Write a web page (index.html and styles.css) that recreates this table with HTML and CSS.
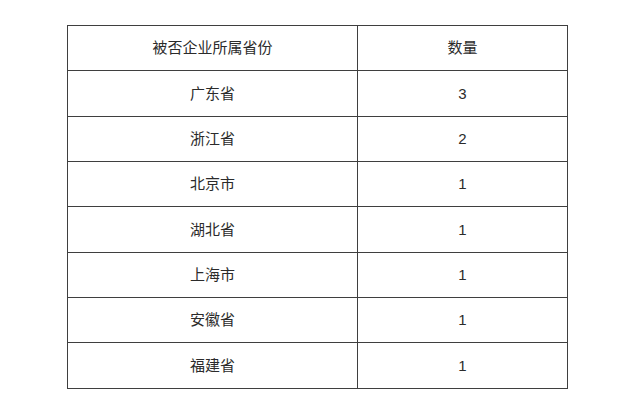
FILE: index.html
```html
<!DOCTYPE html>
<html lang="zh">
<head>
<meta charset="utf-8">
<link rel="stylesheet" href="styles.css">
</head>
<body>
<table class="stats">
  <colgroup><col class="c-prov"><col class="c-num"></colgroup>
  <tr><td>被否企业所属省份</td><td>数量</td></tr>
  <tr><td>广东省</td><td>3</td></tr>
  <tr><td>浙江省</td><td>2</td></tr>
  <tr><td>北京市</td><td>1</td></tr>
  <tr><td>湖北省</td><td>1</td></tr>
  <tr><td>上海市</td><td>1</td></tr>
  <tr><td>安徽省</td><td>1</td></tr>
  <tr><td>福建省</td><td>1</td></tr>
</table>
</body>
</html>
```
FILE: styles.css
```css
html, body {
  margin: 0;
  padding: 0;
  background: #fff;
}
body {
  padding: 25px 0 0 67px;
  font-family: "Liberation Sans", "Noto Sans CJK SC", sans-serif;
  color: #2b2b2b;
}
.stats {
  border-collapse: collapse;
  width: 500px;
  table-layout: fixed;
}
.c-prov { width: 290px; }
.c-num { width: 210px; }
.stats td {
  border: 1px solid #3f3f3f;
  height: 44.35px;
  padding: 0;
  text-align: center;
  vertical-align: middle;
  font-size: 15px;
  line-height: 20px;
}
```
